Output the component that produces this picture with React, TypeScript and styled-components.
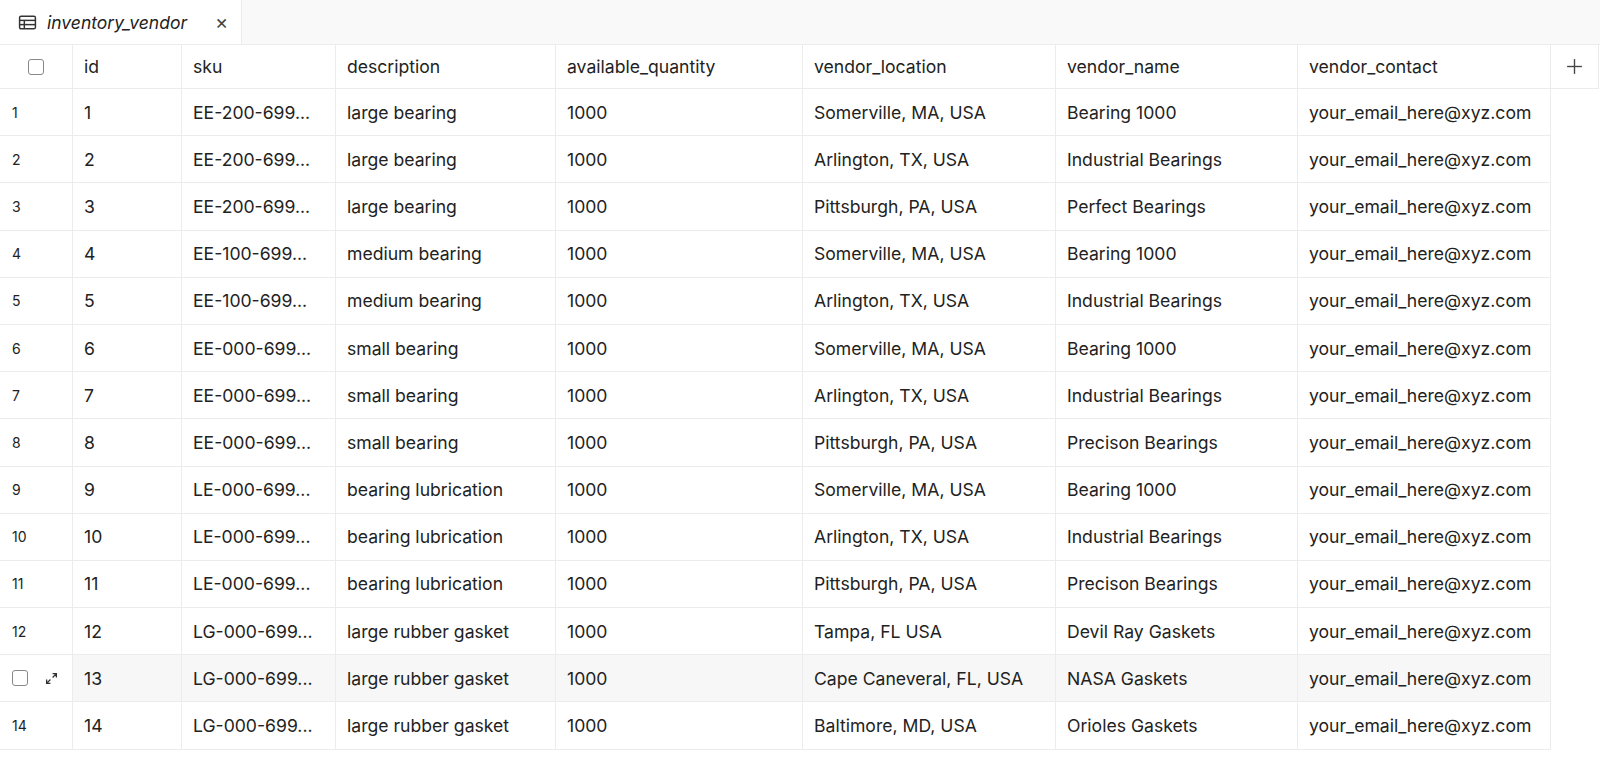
import React from "react";
import styled, { createGlobalStyle } from "styled-components";

const G = createGlobalStyle`
  body { margin: 0; font-family: Inter, "Noto Sans", sans-serif; color: #222; background: #fff; overflow: hidden; }
`;
const cols = "73px 109px 154px 220px 247px 253px 242px 253px 48px";
const TabBar = styled.div`height: 45px; background: #f9f9f9; border-bottom: 1px solid #ececec; display: flex; box-sizing: border-box;`;
const Tab = styled.div`width: 242px; background: #fff; border-right: 1px solid #ececec; display: flex; align-items: center; padding-left: 18px; gap: 10px; box-sizing: border-box; font-style: italic; font-size: 17.5px; color: #222;`;
const Close = styled.span`margin-left: 18px; font-style: normal; color: #444; font-size: 20px;`;
const Row = styled.div<{ $h: number }>`display: grid; grid-template-columns: ${cols}; height: ${p => p.$h}px;`;
const Cell = styled.div<{ $blank?: boolean; $hover?: boolean }>`display: flex; align-items: center; padding-left: 11px; font-size: 17.6px; white-space: nowrap; overflow: hidden; box-sizing: border-box;
  background: ${p => (p.$hover ? "#f7f7f7" : "#fff")};
  border-right: ${p => (p.$blank ? "none" : "1px solid #ececec")}; border-bottom: ${p => (p.$blank ? "none" : "1px solid #ececec")};`;
const NumCell = styled(Cell)`font-size: 14px; padding-left: 12px; justify-content: space-between; padding-right: 14px;`;
const HeadCheck = styled(Cell)`justify-content: center; padding-left: 0;`;
const Box = styled.span`width: 16px; height: 16px; border: 1.4px solid #888; border-radius: 3px; box-sizing: border-box; display: inline-block;`;

const data: string[][] = [
  ["EE-200-699...", "large bearing", "Somerville, MA, USA", "Bearing 1000"],
  ["EE-200-699...", "large bearing", "Arlington, TX, USA", "Industrial Bearings"],
  ["EE-200-699...", "large bearing", "Pittsburgh, PA, USA", "Perfect Bearings"],
  ["EE-100-699...", "medium bearing", "Somerville, MA, USA", "Bearing 1000"],
  ["EE-100-699...", "medium bearing", "Arlington, TX, USA", "Industrial Bearings"],
  ["EE-000-699...", "small bearing", "Somerville, MA, USA", "Bearing 1000"],
  ["EE-000-699...", "small bearing", "Arlington, TX, USA", "Industrial Bearings"],
  ["EE-000-699...", "small bearing", "Pittsburgh, PA, USA", "Precison Bearings"],
  ["LE-000-699...", "bearing lubrication", "Somerville, MA, USA", "Bearing 1000"],
  ["LE-000-699...", "bearing lubrication", "Arlington, TX, USA", "Industrial Bearings"],
  ["LE-000-699...", "bearing lubrication", "Pittsburgh, PA, USA", "Precison Bearings"],
  ["LG-000-699...", "large rubber gasket", "Tampa, FL USA", "Devil Ray Gaskets"],
  ["LG-000-699...", "large rubber gasket", "Cape Caneveral, FL, USA", "NASA Gaskets"],
  ["LG-000-699...", "large rubber gasket", "Baltimore, MD, USA", "Orioles Gaskets"],
];

export default function App() {
  return (
    <>
      <G />
      <TabBar>
        <Tab>
          <svg width="19" height="17" viewBox="0 0 18 16" fill="none" stroke="#333" strokeWidth="1.4">
            <rect x="1.5" y="2" width="15" height="12" rx="1.5" />
            <line x1="1.5" y1="6" x2="16.5" y2="6" />
            <line x1="1.5" y1="10" x2="16.5" y2="10" />
            <line x1="6" y1="6" x2="6" y2="14" />
          </svg>
          inventory_vendor
          <Close>×</Close>
        </Tab>
      </TabBar>
      <Row $h={44}>
        <HeadCheck><Box /></HeadCheck>
        {["id", "sku", "description", "available_quantity", "vendor_location", "vendor_name", "vendor_contact"].map(h => <Cell key={h}>{h}</Cell>)}
        <HeadCheck>
          <svg width="19" height="19" viewBox="0 0 18 18" stroke="#444" strokeWidth="1.3"><line x1="9" y1="2" x2="9" y2="16" /><line x1="2" y1="9" x2="16" y2="9" /></svg>
        </HeadCheck>
      </Row>
      {data.map((d, i) => {
        const h = i === 12;
        return (
          <Row key={i} $h={47.2}>
            {h ? (
              <NumCell>
                <Box />
                <svg width="13" height="13" viewBox="0 0 12 12" stroke="#333" strokeWidth="1.2" fill="none">
                  <path d="M7 1.5h3.5V5M10.5 1.5 7 5M5 10.5H1.5V7M1.5 10.5 5 7" />
                </svg>
              </NumCell>
            ) : (
              <NumCell>{i + 1}</NumCell>
            )}
            <Cell $hover={h}>{i + 1}</Cell>
            <Cell $hover={h}>{d[0]}</Cell>
            <Cell $hover={h}>{d[1]}</Cell>
            <Cell $hover={h}>1000</Cell>
            <Cell $hover={h}>{d[2]}</Cell>
            <Cell $hover={h}>{d[3]}</Cell>
            <Cell $hover={h}>your_email_here@xyz.com</Cell>
            <Cell $blank />
          </Row>
        );
      })}
    </>
  );
}
